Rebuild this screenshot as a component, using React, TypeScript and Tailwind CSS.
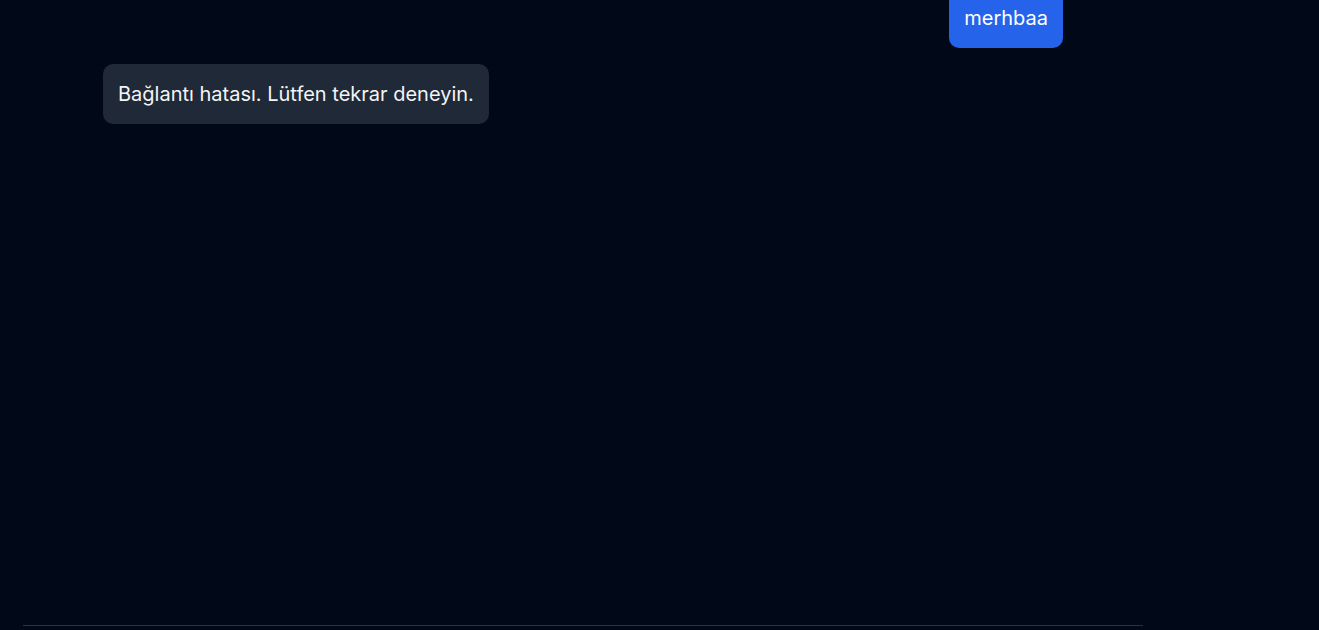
type Message = {
  id: number;
  role: 'user' | 'assistant';
  text: string;
};

const messages: Message[] = [
  { id: 1, role: 'user', text: 'merhbaa' },
  { id: 2, role: 'assistant', text: 'Bağlantı hatası. Lütfen tekrar deneyin.' },
];

export default function App() {
  return (
    <div className="h-[630px] w-full overflow-hidden bg-[#010818] font-['Inter',sans-serif] text-white">
      <div className="flex h-full">
        {/* Chat column */}
        <div className="ml-[23px] flex w-[1120px] flex-col">
          <div className="flex-1 overflow-hidden">
            <div className="-mt-[12px] space-y-4 px-20">
              {messages.map((m) => (
                <div
                  key={m.id}
                  className={`flex ${m.role === 'user' ? 'justify-end' : 'justify-start'}`}
                >
                  <div
                    className={`rounded-[10px] px-[15px] py-4 text-xl leading-7 ${
                      m.role === 'user' ? 'bg-[#2563eb] text-white' : 'bg-[#1f2937] text-[#f3f4f6]'
                    }`}
                  >
                    {m.text}
                  </div>
                </div>
              ))}
            </div>
          </div>

          {/* Input area border */}
          <div className="h-[5px] border-t border-[#2a3240]" />
        </div>
      </div>
    </div>
  );
}
